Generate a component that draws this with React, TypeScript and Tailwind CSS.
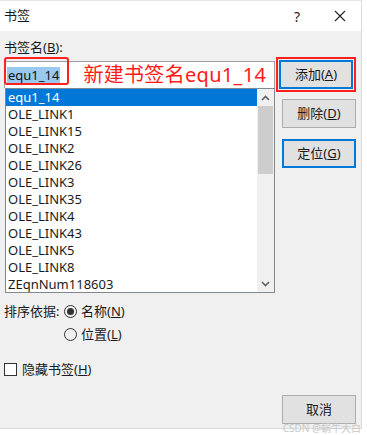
import React from "react";

const items = [
  "equ1_14",
  "OLE_LINK1",
  "OLE_LINK15",
  "OLE_LINK2",
  "OLE_LINK26",
  "OLE_LINK3",
  "OLE_LINK35",
  "OLE_LINK4",
  "OLE_LINK43",
  "OLE_LINK5",
  "OLE_LINK8",
  "ZEqnNum118603",
];

const font = { fontFamily: '"Noto Sans","Noto Sans CJK SC",sans-serif' };

function Btn({ label, k, focus }: { label: string; k?: string; focus?: boolean }) {
  return (
    <div
      className={
        "w-[74px] h-[29px] flex items-center justify-center bg-[#e1e1e1] text-[13px] text-[#1a1a1a] " +
        (focus ? "border-2 border-[#0078d7]" : "border border-[#adadad]")
      }
    >
      {k ? (
        <span>
          {label}(<span className="underline">{k}</span>)
        </span>
      ) : (
        <span>{label}</span>
      )}
    </div>
  );
}

export default function App() {
  return (
    <div className="w-[367px] h-[435px] bg-white overflow-hidden relative" style={font}>
      <div className="w-[362px] h-[429px] flex flex-col border-r border-b border-[#dcdcdc]">
        {/* title */}
        <div className="h-[31px] bg-white border-t border-[#e5e5e5] flex items-center pl-[4px] text-[13px] text-[#1a1a1a]">
          <span className="flex-1">书签</span>
          <span className="w-[44px] text-center text-[14px]">?</span>
          <span className="w-[42px] flex justify-center">
            <svg width="12" height="12" viewBox="0 0 12 12">
              <path d="M1 1L11 11M11 1L1 11" stroke="#222" strokeWidth="1.1" />
            </svg>
          </span>
        </div>
        {/* body */}
        <div className="flex-1 bg-[#f0f0f0] flex pl-[4px] pr-[5px] text-[13px] text-[#1a1a1a]">
          <div className="w-[271px] flex flex-col">
            <div className="h-[30px] pt-[8px] leading-[17px]">
              书签名(<span className="underline">B</span>):
            </div>
            <div className="relative h-[27px] bg-white border border-[#a0a0a0] border-b-0 flex items-center pl-[2px]">
              <span className="bg-[#99c9ef] text-[#111] text-[13px] leading-[17px] px-[1px]">equ1_14</span>
              <span className="ml-[23px] text-[#ff1a1a] text-[20px] leading-[20px] whitespace-nowrap tracking-[0.3px]">
                新建书签名equ1_14
              </span>
              <div className="absolute left-[-1px] top-[-5px] w-[65px] h-[28px] border-2 border-[#ff2020] rounded-[3px]" />
            </div>
            <div className="h-[205px] bg-white border border-[#828790] ml-[1px] flex">
              <div className="flex-1 flex flex-col">
                {items.map((it, i) => (
                  <div
                    key={it}
                    className={
                      "h-[17px] leading-[17px] pl-[2px] text-[13px] " +
                      (i === 0 ? "bg-[#0078d7] text-white" : "text-[#1a1a1a]")
                    }
                  >
                    {it}
                  </div>
                ))}
              </div>
              <div className="w-[17px] bg-[#f0f0f0] flex flex-col">
                <div className="h-[17px] flex items-center justify-center">
                  <svg width="9" height="6" viewBox="0 0 9 6">
                    <path d="M1 5L4.5 1.5L8 5" stroke="#606060" strokeWidth="1.6" fill="none" />
                  </svg>
                </div>
                <div className="h-[68px] mx-[1px] bg-[#cdcdcd]" />
                <div className="flex-1" />
                <div className="h-[17px] flex items-center justify-center">
                  <svg width="9" height="6" viewBox="0 0 9 6">
                    <path d="M1 1L4.5 4.5L8 1" stroke="#606060" strokeWidth="1.6" fill="none" />
                  </svg>
                </div>
              </div>
            </div>
            <div className="flex mt-[10px]">
              <span className="w-[60px] leading-[17px]">排序依据:</span>
              <div className="flex flex-col gap-[6px]">
                <div className="flex items-center gap-[4px] h-[17px]">
                  <span className="w-[13px] h-[13px] rounded-full border border-[#333] flex items-center justify-center">
                    <span className="w-[7px] h-[7px] rounded-full bg-[#333]" />
                  </span>
                  <span>
                    名称(<span className="underline">N</span>)
                  </span>
                </div>
                <div className="flex items-center gap-[4px] h-[17px]">
                  <span className="w-[13px] h-[13px] rounded-full border border-[#333]" />
                  <span>
                    位置(<span className="underline">L</span>)
                  </span>
                </div>
              </div>
            </div>
            <div className="flex items-center gap-[5px] mt-[18px] h-[17px]">
              <span className="w-[13px] h-[13px] border border-[#333] bg-white" />
              <span>
                隐藏书签(<span className="underline">H</span>)
              </span>
            </div>
          </div>
          <div className="flex-1 flex flex-col items-end">
            <div className="mt-[26px] border-2 border-[#ff2020] p-[1px] w-[80px] flex justify-center">
              <Btn label="添加" k="A" focus />
            </div>
            <div className="mt-[7px]">
              <Btn label="删除" k="D" />
            </div>
            <div className="mt-[11px]">
              <Btn label="定位" k="G" focus />
            </div>
            <div className="flex-1" />
            <div className="mb-[4px]">
              <Btn label="取消" />
            </div>
          </div>
        </div>
      </div>
      <div className="absolute right-[6px] bottom-[1px] text-[10px] text-[#c8c8c8] leading-[12px]">
        CSDN @蜗牛大白
      </div>
    </div>
  );
}
